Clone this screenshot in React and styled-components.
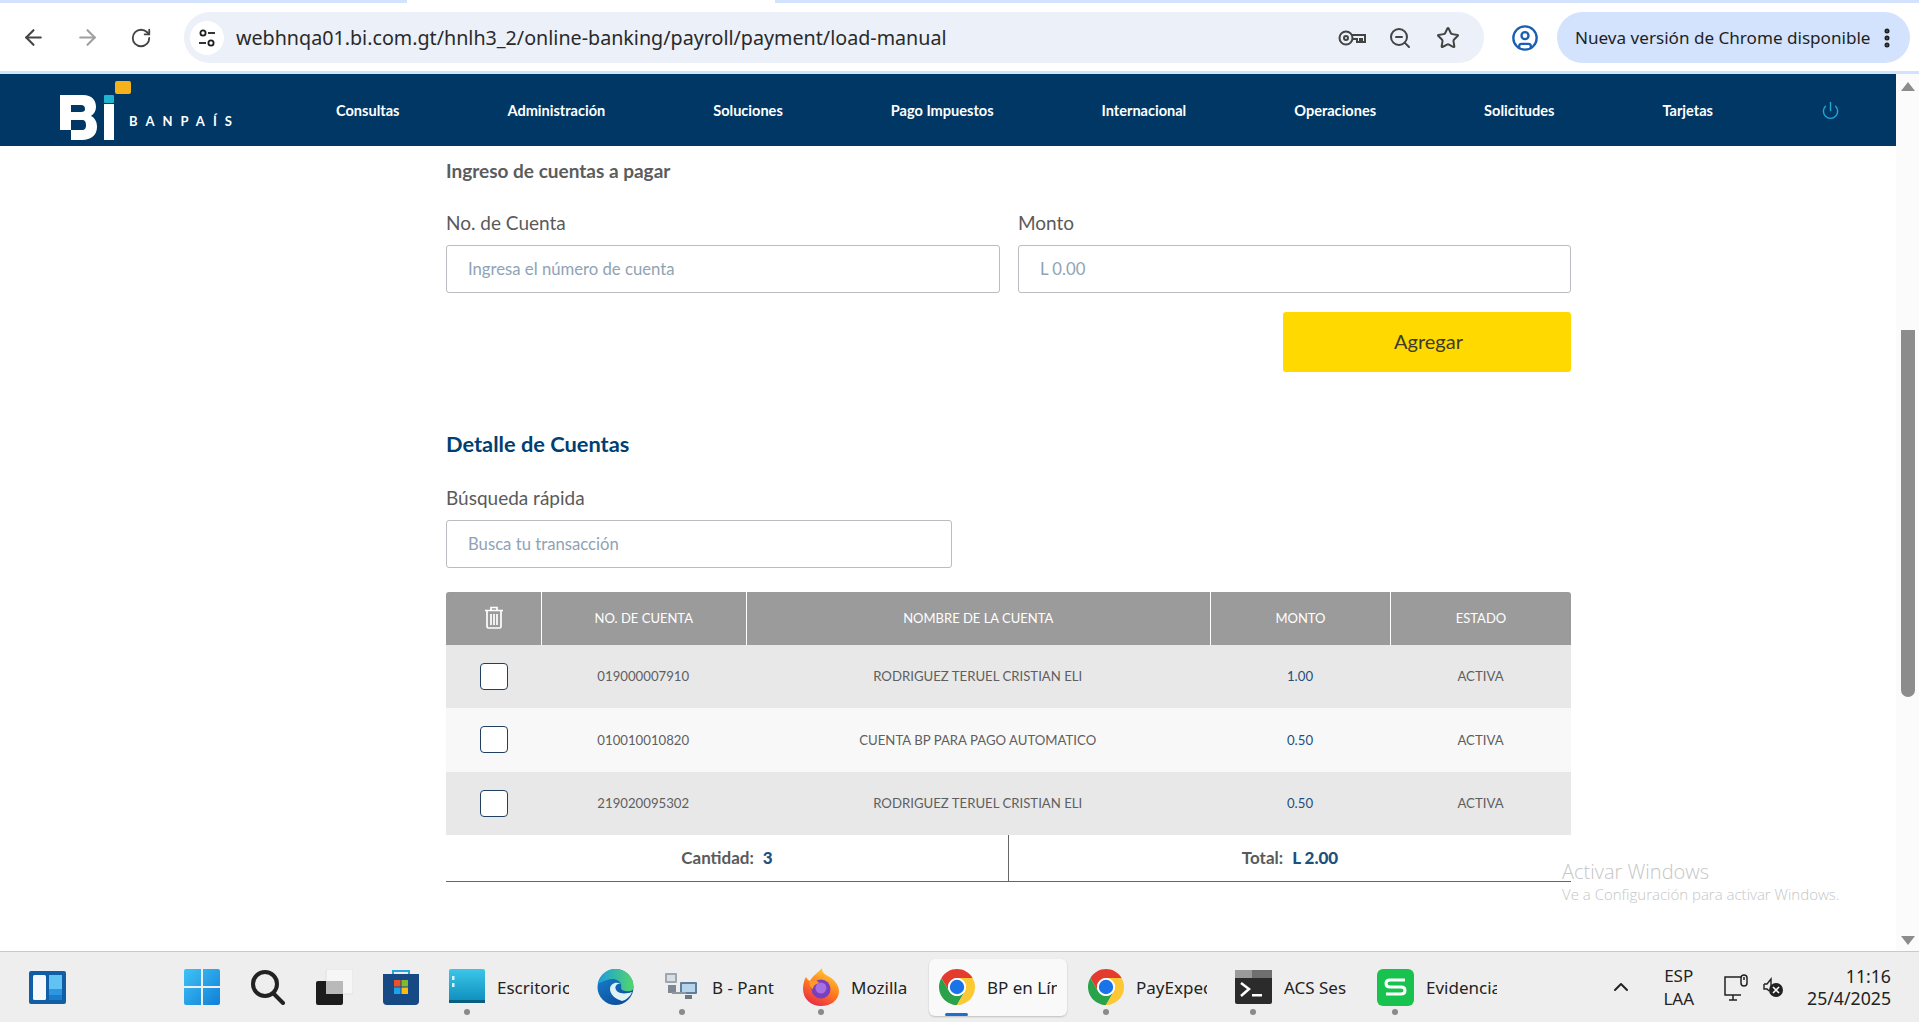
import React from "react";
import styled, { createGlobalStyle } from "styled-components";
import { ArrowLeft, ArrowRight, RotateCw, ZoomOut, Star, CircleUser, EllipsisVertical, Power, ChevronUp } from "lucide-react";

const Global = createGlobalStyle`
  html, body { margin: 0; padding: 0; background: #fff; overflow: hidden; }
  * { box-sizing: border-box; }
`;

const menu = ["Consultas", "Administración", "Soluciones", "Pago Impuestos", "Internacional", "Operaciones", "Solicitudes", "Tarjetas"];

const rows = [
  { id: "019000007910", name: "RODRIGUEZ TERUEL CRISTIAN ELI", amount: "1.00", h: 63 },
  { id: "010010010820", name: "CUENTA BP PARA PAGO AUTOMATICO", amount: "0.50", h: 64 },
  { id: "219020095302", name: "RODRIGUEZ TERUEL CRISTIAN ELI", amount: "0.50", h: 63 },
];

function SiteIcon() {
  return (
    <svg width="20" height="20" viewBox="0 0 20 20" fill="none" stroke="#1f1f1f" strokeWidth="1.8">
      <circle cx="6" cy="5" r="2.6" />
      <path d="M11 5h7" />
      <circle cx="14" cy="15" r="2.6" />
      <path d="M2 15h7" />
    </svg>
  );
}

function KeyIcon() {
  return (
    <svg width="28" height="18" viewBox="0 0 28 18" fill="none" stroke="#444" strokeWidth="2">
      <circle cx="8" cy="9" r="6.5" />
      <circle cx="8" cy="9" r="2" />
      <path d="M14 6h13v7h-3v-3h-2v3h-3v-3h-5" />
    </svg>
  );
}

function LogoMark() {
  return (
    <svg width="71" height="59" viewBox="0 0 71 59">
      <path
        fill="#fff"
        fillRule="evenodd"
        d="M0 14H23C32 14 36 19 36 26C36 30 34 33 31 35C35 37 37 41 37 46C37 54 31 59 22 59H11V49H0ZM11 24V31H21C24 31 25 30 25 28C25 26 24 24 21 24ZM11 39V49H22C25 49 26 47 26 44C26 41 25 39 22 39Z"
      />
      <rect x="44" y="23" width="10" height="36" fill="#fff" />
      <rect x="44" y="14" width="10" height="8" rx="1" fill="#1fb5d0" />
      <rect x="55" y="0" width="16" height="13" rx="2" fill="#f5b21a" />
    </svg>
  );
}

function TrashIcon() {
  return (
    <svg width="20" height="23" viewBox="0 0 20 23" fill="none" stroke="#fff" strokeWidth="1.7">
      <path d="M1 4.5h18M7 4V1.5h6V4" />
      <path d="M3 5v15.5q0 1.5 1.5 1.5h11q1.5 0 1.5-1.5V5" />
      <path d="M7 8v11M10 8v11M13 8v11" />
    </svg>
  );
}

function WidgetsIcon() {
  return (
    <svg width="37" height="33" viewBox="0 0 37 33">
      <rect width="37" height="33" rx="2" fill="#0f5ea6" />
      <rect x="4" y="4" width="13" height="25" rx="1.5" fill="#f4f8fb" />
      <rect x="20" y="4" width="13" height="14" fill="#62c3f3" />
      <rect x="20" y="18" width="13" height="6" fill="#2b97e0" />
      <rect x="20" y="24" width="13" height="5" fill="#1b7ccb" />
    </svg>
  );
}

function WinIcon() {
  return (
    <svg width="36" height="36" viewBox="0 0 36 36">
      <defs>
        <linearGradient id="win" x1="0" y1="0" x2="1" y2="1">
          <stop offset="0" stopColor="#3fc3f6" />
          <stop offset="1" stopColor="#0f7fd8" />
        </linearGradient>
      </defs>
      <path fill="url(#win)" d="M0 2q0-2 2-2h15v17H0zM19 0h15q2 0 2 2v15H19zM0 19h17v17H2q-2 0-2-2zM19 19h17v15q0 2-2 2H19z" />
    </svg>
  );
}

function SearchIcon() {
  return (
    <svg width="36" height="36" viewBox="0 0 36 36" fill="none" stroke="#222" strokeWidth="4" strokeLinecap="round">
      <circle cx="15" cy="15" r="12" />
      <path d="M24 25l9 9" />
    </svg>
  );
}

function TaskViewIcon() {
  return (
    <svg width="37" height="36" viewBox="0 0 37 36">
      <rect x="10" y="0" width="27" height="25" rx="2" fill="#f6f6f6" stroke="#e0e0e0" />
      <rect x="0" y="12" width="27" height="24" rx="2" fill="#1c1c1c" />
      <rect x="10" y="12" width="17" height="13" fill="#b9b9b9" />
    </svg>
  );
}

function StoreIcon() {
  return (
    <svg width="36" height="36" viewBox="0 0 36 36">
      <path d="M10 5V2h16v3" fill="none" stroke="#2aa3e0" strokeWidth="2" />
      <path d="M0 5h36v27q0 4-4 4H4q-4 0-4-4z" fill="#174a85" />
      <rect x="11" y="11" width="6.5" height="6.5" fill="#e8532d" />
      <rect x="18.5" y="11" width="6.5" height="6.5" fill="#7fba2f" />
      <rect x="11" y="18.5" width="6.5" height="6.5" fill="#1ba4e8" />
      <rect x="18.5" y="18.5" width="6.5" height="6.5" fill="#fbba14" />
    </svg>
  );
}

function ExplorerIcon() {
  return (
    <svg width="36" height="36" viewBox="0 0 36 36">
      <defs>
        <linearGradient id="desk" x1="0" y1="0" x2="0" y2="1">
          <stop offset="0" stopColor="#3cc6e8" />
          <stop offset="1" stopColor="#0d8ebd" />
        </linearGradient>
      </defs>
      <rect width="36" height="33" rx="2" fill="url(#desk)" />
      <rect x="3" y="7" width="2.5" height="4" fill="#d5f3fb" />
      <rect x="3" y="14" width="2.5" height="4" fill="#d5f3fb" />
      <rect y="31" width="36" height="3" fill="#0a5f80" />
    </svg>
  );
}

function EdgeIcon() {
  return (
    <svg width="37" height="36" viewBox="0 0 37 36">
      <defs>
        <linearGradient id="edgeBase" x1="0" y1="0" x2="0.6" y2="1">
          <stop offset="0" stopColor="#1a86d0" />
          <stop offset="1" stopColor="#0b4f9e" />
        </linearGradient>
        <linearGradient id="edgeTop" x1="0" y1="0.5" x2="1" y2="0.5">
          <stop offset="0" stopColor="#1b9de0" />
          <stop offset="1" stopColor="#52d66b" />
        </linearGradient>
      </defs>
      <circle cx="18.5" cy="18" r="18" fill="url(#edgeBase)" />
      <path d="M1 15C3 6 10 0 18.5 0C29 0 36.5 8 36.5 18C36.5 22 33 23 28 22C22 21 25 17 24 15C22 10 15 9 10 11C6 12 3 14 1 15Z" fill="url(#edgeTop)" />
      <path d="M13 20C13 15 19 12 24 15C21 14 18 16 18.5 19.5C19.5 24 26 26 35 23C33 28 29 31 25 32C18 30 13 25 13 20Z" fill="#dff3f6" />
    </svg>
  );
}

function NetworkIcon() {
  return (
    <svg width="36" height="30" viewBox="0 0 36 30">
      <rect x="1" y="1" width="12" height="10" rx="1" fill="#9ca7b1" />
      <rect x="3" y="3" width="8" height="6" fill="#d8dee3" />
      <rect x="4" y="13" width="8" height="8" fill="#7d8892" />
      <rect x="16" y="10" width="17" height="12" rx="1" fill="#5f7f9c" />
      <rect x="18" y="12" width="13" height="8" fill="#b6d4ea" />
      <rect x="21" y="23" width="7" height="4" fill="#6d7882" />
      <rect x="8" y="20" width="14" height="2" fill="#8c97a1" />
    </svg>
  );
}

function FirefoxIcon() {
  return (
    <svg width="36" height="38" viewBox="0 0 36 38">
      <defs>
        <linearGradient id="fox" x1="0.7" y1="0" x2="0.2" y2="1">
          <stop offset="0" stopColor="#ffd33a" />
          <stop offset="0.5" stopColor="#ff7a1e" />
          <stop offset="1" stopColor="#e5234f" />
        </linearGradient>
      </defs>
      <path d="M3 9c1 2 2 3 4 4 3-6 8-8 12-13 0 4 2 6 6 8 6 3 11 9 11 15 0 9-8 15-18 15S0 31 0 21c0-4 1-9 3-12z" fill="url(#fox)" />
      <circle cx="18" cy="21" r="9.5" fill="#7a3fc0" />
      <circle cx="18" cy="20" r="5.5" fill="#a86fe0" />
      <path d="M6 14c4-2 8-2 10 1-4 1-6 3-6 6-2-1-4-4-4-7z" fill="#ff9a2a" />
    </svg>
  );
}

function ChromeIcon() {
  return (
    <svg width="36" height="36" viewBox="4 4 40 40">
      <path d="M6.68 14A20 20 0 0 1 41.32 14H24A10 10 0 0 0 15.34 29Z" fill="#e33b2e" />
      <path d="M6.68 14A20 20 0 0 0 24 44L32.66 29A10 10 0 0 1 15.34 29Z" fill="#2aa24a" />
      <path d="M41.32 14A20 20 0 0 1 24 44L32.66 29A10 10 0 0 0 24 14Z" fill="#fcc934" />
      <circle cx="24" cy="24" r="10" fill="#fff" />
      <circle cx="24" cy="24" r="8" fill="#1a73e8" />
    </svg>
  );
}

function TerminalIcon() {
  return (
    <svg width="37" height="34" viewBox="0 0 37 34">
      <rect width="37" height="34" rx="2" fill="#2b2b2b" />
      <rect width="37" height="8" fill="#9a9a9a" />
      <rect x="17" width="20" height="8" fill="#6f6f6f" />
      <path d="M6 13l8 6-8 7" fill="none" stroke="#fff" strokeWidth="2.5" />
      <rect x="17" y="24" width="10" height="2.5" fill="#fff" />
    </svg>
  );
}

function SheetIcon() {
  return (
    <svg width="37" height="37" viewBox="0 0 37 37">
      <rect width="37" height="37" rx="6" fill="#18c24f" />
      <path d="M28 11H13q-4 0-4 3.5T13 18h11q4 0 4 3.5T24 25H9" fill="none" stroke="#fff" strokeWidth="3" />
    </svg>
  );
}

function MonitorIcon() {
  return (
    <svg width="25" height="27" viewBox="0 0 25 27" fill="none" stroke="#222" strokeWidth="1.5">
      <path d="M18 3H2v18h16" />
      <path d="M6 26h8M10 21v5" />
      <rect x="18" y="1" width="6" height="11" rx="3" />
      <path d="M21 3v3" />
    </svg>
  );
}

function SoundOffIcon() {
  return (
    <svg width="21" height="20" viewBox="0 0 21 20">
      <path d="M2 7h3l4-5v9" fill="none" stroke="#222" strokeWidth="1.4" />
      <path d="M2 7v5h3l2 2" fill="none" stroke="#222" strokeWidth="1.4" />
      <circle cx="14" cy="13" r="7" fill="#222" />
      <path d="M11 10l6 6M17 10l-6 6" stroke="#fff" strokeWidth="1.6" />
    </svg>
  );
}

function TaskItem({ icon, label, labelWidth, dot, active }) {
  return (
    <AppButton $active={active} $labelled={!!label}>
      {icon}
      {label && <AppLabel $w={labelWidth}>{label}</AppLabel>}
      {dot && <RunDot />}
      {active && <ActiveBar />}
    </AppButton>
  );
}

export default function App() {
  return (
    <Page>
      <Global />
      <TabStrip>
        <ActiveTab />
      </TabStrip>
      <Toolbar>
        <ToolButton><ArrowLeft size={25} color="#444" strokeWidth={2} /></ToolButton>
        <ToolButton><ArrowRight size={25} color="#a0a0a0" strokeWidth={2} /></ToolButton>
        <ToolButton><RotateCw size={22} color="#444" strokeWidth={2} /></ToolButton>
        <Omnibox>
          <SiteChip><SiteIcon /></SiteChip>
          <Url>webhnqa01.bi.com.gt/hnlh3_2/online-banking/payroll/payment/load-manual</Url>
          <OmniIcon><KeyIcon /></OmniIcon>
          <OmniIcon><ZoomOut size={24} color="#444" strokeWidth={2} /></OmniIcon>
          <OmniIcon><Star size={24} color="#444" strokeWidth={2} /></OmniIcon>
        </Omnibox>
        <ProfileButton><CircleUser size={28} color="#1a5fb4" strokeWidth={2} /></ProfileButton>
        <UpdatePill>
          <span>Nueva versión de Chrome disponible</span>
          <EllipsisVertical size={24} color="#1f1f1f" strokeWidth={3} />
        </UpdatePill>
      </Toolbar>

      <Viewport>
        <Main>
          <Nav>
            <Logo>
              <LogoMark />
              <LogoText>BANPAÍS</LogoText>
            </Logo>
            {menu.map((item) => (
              <NavItem key={item}>{item}</NavItem>
            ))}
            <NavItem><Power size={19} color="#1fa9d6" strokeWidth={1.8} /></NavItem>
          </Nav>
          <Content>
            <FormTitle>Ingreso de cuentas a pagar</FormTitle>
            <FormRow>
              <Field>
                <Label>No. de Cuenta</Label>
                <Input placeholder="Ingresa el número de cuenta" />
              </Field>
              <Field>
                <Label>Monto</Label>
                <Input placeholder="L 0.00" />
              </Field>
            </FormRow>
            <ButtonRow>
              <AddButton>Agregar</AddButton>
            </ButtonRow>
            <SectionTitle>Detalle de Cuentas</SectionTitle>
            <SearchField>
              <Label>Búsqueda rápida</Label>
              <Input placeholder="Busca tu transacción" />
            </SearchField>
            <Table>
              <HeadRow>
                <HeadCell><TrashIcon /></HeadCell>
                <HeadCell>NO. DE CUENTA</HeadCell>
                <HeadCell>NOMBRE DE LA CUENTA</HeadCell>
                <HeadCell>MONTO</HeadCell>
                <HeadCell>ESTADO</HeadCell>
              </HeadRow>
              {rows.map((r, i) => (
                <BodyRow key={r.id} $h={r.h} $odd={i % 2 === 1}>
                  <Cell><Check /></Cell>
                  <Cell>{r.id}</Cell>
                  <Cell>{r.name}</Cell>
                  <Cell $blue>{r.amount}</Cell>
                  <Cell>ACTIVA</Cell>
                </BodyRow>
              ))}
            </Table>
            <Summary>
              <SummaryCell>Cantidad: <b>3</b></SummaryCell>
              <SummaryCell $split>Total: <b>L 2.00</b></SummaryCell>
            </Summary>
          </Content>
          <Activate>
            <ActivateTitle>Activar Windows</ActivateTitle>
            <ActivateText>Ve a Configuración para activar Windows.</ActivateText>
          </Activate>
        </Main>
        <Scrollbar>
          <ArrowUp />
          <Thumb />
          <ArrowDown />
        </Scrollbar>
      </Viewport>

      <Taskbar>
        <WidgetSlot><WidgetsIcon /></WidgetSlot>
        <TaskItem icon={<WinIcon />} />
        <TaskItem icon={<SearchIcon />} />
        <TaskItem icon={<TaskViewIcon />} />
        <TaskItem icon={<StoreIcon />} />
        <TaskItem icon={<ExplorerIcon />} label="Escritorio" labelWidth={72} dot />
        <TaskItem icon={<EdgeIcon />} />
        <TaskItem icon={<NetworkIcon />} label="B - Pant" labelWidth={63} dot />
        <TaskItem icon={<FirefoxIcon />} label="Mozilla" labelWidth={65} dot />
        <TaskItem icon={<ChromeIcon />} label="BP en Lín" labelWidth={70} active />
        <TaskItem icon={<ChromeIcon />} label="PayExped" labelWidth={71} dot />
        <TaskItem icon={<TerminalIcon />} label="ACS Ses" labelWidth={65} dot />
        <TaskItem icon={<SheetIcon />} label="Evidencia" labelWidth={71} dot />
        <Tray>
          <ChevronUp size={24} color="#222" strokeWidth={2} />
          <Lang><span>ESP</span><span>LAA</span></Lang>
          <TrayIcons>
            <MonitorIcon />
            <SoundOffIcon />
          </TrayIcons>
          <Clock><span>11:16</span><span>25/4/2025</span></Clock>
        </Tray>
      </Taskbar>
    </Page>
  );
}

const Page = styled.div`
  width: 1919px;
  height: 1022px;
  display: flex;
  flex-direction: column;
  overflow: hidden;
  font-family: "Lato", sans-serif;
`;

const TabStrip = styled.div`
  height: 3px;
  background: #d3e3fd;
  padding-left: 407px;
`;

const ActiveTab = styled.div`
  width: 368px;
  height: 3px;
  background: #fff;
`;

const Toolbar = styled.div`
  height: 71px;
  display: flex;
  align-items: center;
  padding: 1px 9px 0 6px;
  background: #fff;
  border-bottom: 3px solid #d3e3fd;
  font-family: "Noto Sans", sans-serif;
`;

const ToolButton = styled.div`
  width: 54px;
  display: flex;
  justify-content: center;
`;

const Omnibox = styled.div`
  width: 1300px;
  height: 51px;
  margin-left: 16px;
  padding: 0 12px 0 6px;
  display: flex;
  align-items: center;
  background: #ebf0f9;
  border-radius: 26px;
`;

const SiteChip = styled.div`
  width: 34px;
  height: 34px;
  border-radius: 50%;
  background: #fff;
  display: flex;
  align-items: center;
  justify-content: center;
`;

const Url = styled.div`
  flex: 1;
  margin-left: 12px;
  font-size: 19.7px;
  color: #2a2a2a;
  white-space: nowrap;
`;

const OmniIcon = styled.div`
  width: 48px;
  display: flex;
  justify-content: center;
`;

const ProfileButton = styled.div`
  width: 48px;
  margin-left: 17px;
  display: flex;
  justify-content: center;
`;

const UpdatePill = styled.div`
  width: 353px;
  height: 51px;
  margin-left: 8px;
  padding: 0 11px 0 18px;
  display: flex;
  align-items: center;
  justify-content: space-between;
  background: #d3e3fd;
  border-radius: 26px;
  font-size: 17.1px;
  color: #1f1f1f;
  white-space: nowrap;
`;

const Viewport = styled.div`
  height: 877px;
  display: flex;
`;

const Main = styled.div`
  position: relative;
  width: 1896px;
  background: #fff;
`;

const Nav = styled.nav`
  height: 72px;
  padding-left: 60px;
  display: flex;
  align-items: center;
  background: #003764;
`;

const Logo = styled.div`
  display: flex;
  align-items: flex-end;
  margin-right: 51px;
`;

const LogoText = styled.div`
  width: 102px;
  margin: 0 0 12px -2px;
  font-size: 13px;
  line-height: 14px;
  font-weight: 700;
  letter-spacing: 8px;
  color: #fff;
  white-space: nowrap;
`;

const NavItem = styled.div`
  padding: 0 54px;
  display: flex;
  align-items: center;
  font-size: 14.56px;
  font-weight: 700;
  color: #fff;
  white-space: nowrap;
`;

const Content = styled.main`
  width: 1571px;
  padding: 14px 0 0 446px;
`;

const FormTitle = styled.h2`
  margin: 0;
  font-size: 19px;
  line-height: 22px;
  font-weight: 700;
  color: #5c5c5c;
`;

const FormRow = styled.div`
  margin-top: 30px;
  display: grid;
  grid-template-columns: 554px 553px;
  gap: 18px;
`;

const Field = styled.div`
  display: flex;
  flex-direction: column;
  gap: 11px;
`;

const Label = styled.label`
  font-size: 19px;
  line-height: 22px;
  color: #5a5a5a;
`;

const Input = styled.input`
  width: 100%;
  height: 48px;
  padding: 0 21px;
  border: 1px solid #b9bcc0;
  border-radius: 3px;
  background: #fff;
  font-family: inherit;
  font-size: 16.7px;
  outline: none;
  &::placeholder {
    color: #8fa3b5;
    opacity: 1;
  }
`;

const ButtonRow = styled.div`
  margin-top: 19px;
  display: flex;
  justify-content: flex-end;
`;

const AddButton = styled.button`
  width: 288px;
  height: 60px;
  padding: 0 0 2px 3px;
  border: 0;
  border-radius: 3px;
  background: #ffd900;
  font-family: inherit;
  font-size: 20px;
  color: #3c3c28;
`;

const SectionTitle = styled.h2`
  margin: 58px 0 0;
  font-size: 21.8px;
  line-height: 28px;
  font-weight: 700;
  color: #003f72;
`;

const SearchField = styled(Field)`
  width: 506px;
  margin-top: 29px;
`;

const Table = styled.div`
  margin-top: 24px;
  border-radius: 3px 3px 0 0;
  overflow: hidden;
`;

const columns = "95px 204.5px 464.5px 180px 181px";

const HeadRow = styled.div`
  display: grid;
  grid-template-columns: ${columns};
  height: 53px;
  background: #9b9b9b;
`;

const HeadCell = styled.div`
  display: flex;
  align-items: center;
  justify-content: center;
  padding-bottom: 2px;
  font-size: 13px;
  color: #fff;
  & + & {
    border-left: 1px solid #fff;
  }
`;

const BodyRow = styled.div`
  display: grid;
  grid-template-columns: ${columns};
  height: ${(p) => p.$h}px;
  background: ${(p) => (p.$odd ? "#f8f8f8" : "#e8e8e8")};
`;

const Cell = styled.div`
  display: flex;
  align-items: center;
  justify-content: center;
  font-size: 13.2px;
  padding-bottom: 1px;
  color: ${(p) => (p.$blue ? "#1f4f7d" : "#5f5f5f")};
`;

const Check = styled.div`
  width: 28px;
  height: 27px;
  border: 1.5px solid #1f4060;
  border-radius: 4px;
  background: #fff;
`;

const Summary = styled.div`
  height: 47px;
  display: grid;
  grid-template-columns: 562px 563px;
  border-bottom: 1.5px solid #666;
`;

const SummaryCell = styled.div`
  display: flex;
  align-items: center;
  justify-content: center;
  gap: 9px;
  padding-bottom: 1px;
  font-size: 17px;
  font-weight: 700;
  color: #5a5a5a;
  border-left: ${(p) => (p.$split ? "1px solid #666" : "0")};
  & b {
    color: #1f4f7d;
  }
`;

const Activate = styled.div`
  position: absolute;
  left: 1562px;
  top: 785px;
  font-family: "Open Sans", sans-serif;
  font-weight: 300;
  color: #c6c6c6;
`;

const ActivateTitle = styled.div`
  font-size: 20px;
  line-height: 26px;
`;

const ActivateText = styled.div`
  font-size: 15px;
  line-height: 18px;
`;

const Scrollbar = styled.div`
  width: 23px;
  padding: 8px 0 6px;
  display: flex;
  flex-direction: column;
  align-items: center;
  background: #fbfbfb;
`;

const ArrowUp = styled.div`
  width: 0;
  height: 0;
  border-left: 7px solid transparent;
  border-right: 7px solid transparent;
  border-bottom: 9px solid #8c8c8c;
`;

const ArrowDown = styled.div`
  width: 0;
  height: 0;
  margin-top: auto;
  border-left: 7px solid transparent;
  border-right: 7px solid transparent;
  border-top: 9px solid #8c8c8c;
`;

const Thumb = styled.div`
  width: 14px;
  height: 367px;
  margin-top: 239px;
  background: #8c8c8c;
  border-radius: 0 0 7px 7px;
`;

const Taskbar = styled.footer`
  height: 71px;
  display: flex;
  align-items: center;
  background: #eeeeee;
  border-top: 1px solid #c9c9c9;
  font-family: "Noto Sans", sans-serif;
  color: #222;
`;

const WidgetSlot = styled.div`
  width: 169px;
  padding-left: 29px;
  display: flex;
`;

const AppButton = styled.div`
  position: relative;
  height: 57px;
  display: flex;
  align-items: center;
  gap: 12px;
  padding: ${(p) => (p.$active ? "0 10px" : p.$labelled ? "0 13px 0 15px" : "0 15px")};
  margin-right: ${(p) => (p.$active ? "6px" : "0")};
  border-radius: 6px;
  background: ${(p) => (p.$active ? "#f9f9f9" : "transparent")};
  box-shadow: ${(p) => (p.$active ? "0 1px 2px rgba(0,0,0,.2)" : "none")};
`;

const AppLabel = styled.span`
  width: ${(p) => p.$w}px;
  overflow: hidden;
  white-space: nowrap;
  font-size: 17px;
`;

const RunDot = styled.i`
  position: absolute;
  left: 30px;
  bottom: 1px;
  width: 6px;
  height: 6px;
  border-radius: 50%;
  background: #8a8a8a;
`;

const ActiveBar = styled.i`
  position: absolute;
  left: 16px;
  bottom: 0;
  width: 23px;
  height: 3px;
  border-radius: 2px;
  background: #1a6fd0;
`;

const Tray = styled.div`
  margin-left: auto;
  padding-right: 28px;
  display: flex;
  align-items: center;
`;

const Lang = styled.div`
  margin-left: 30px;
  display: flex;
  flex-direction: column;
  align-items: center;
  font-size: 17px;
  line-height: 23px;
`;

const TrayIcons = styled.div`
  margin-left: 29px;
  display: flex;
  align-items: center;
  gap: 14px;
`;

const Clock = styled.div`
  margin-left: 24px;
  display: flex;
  flex-direction: column;
  align-items: flex-end;
  font-size: 17.7px;
  line-height: 22px;
`;
